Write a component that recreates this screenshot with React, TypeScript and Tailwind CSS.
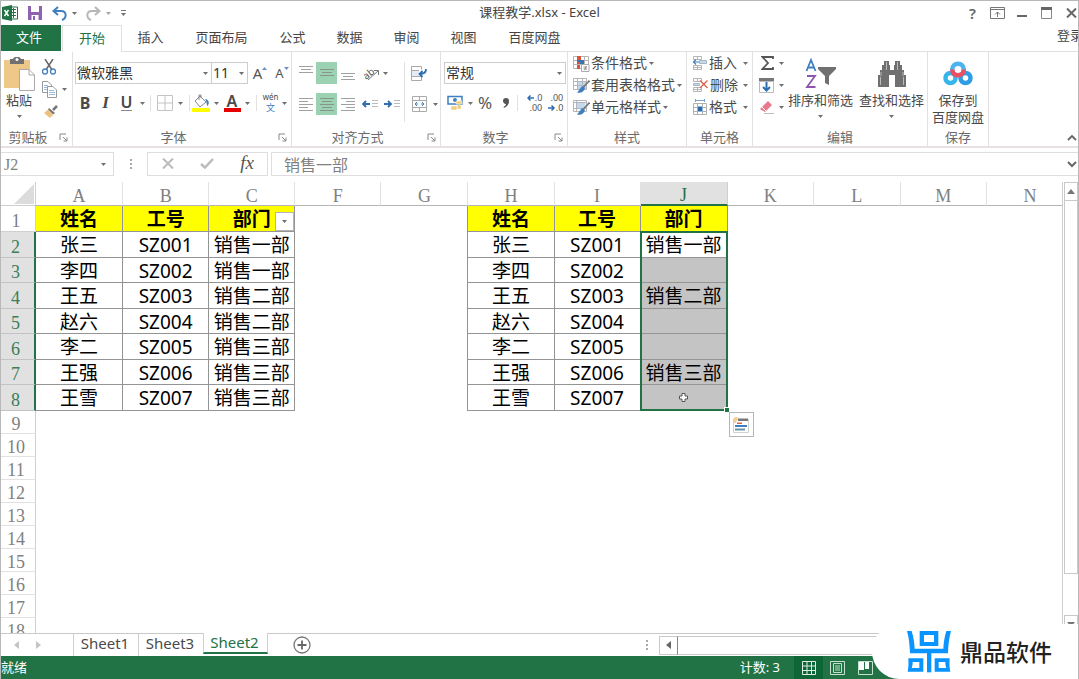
import React from "react";

type KidsProps = { children?: React.ReactNode };

const Caret = ({ className = "" }: { className?: string }) => (
  <svg className={`h-[3px] w-[5px] shrink-0 ${className}`} viewBox="0 0 5 3" aria-hidden="true">
    <path d="M0 0H5L2.5 3Z" fill="#707070" />
  </svg>
);

const Sep = ({ className = "h-4" }: { className?: string }) => (
  <span className={`w-px shrink-0 bg-[#e1e1e1] ${className}`} />
);

function Icon({ w, h, children }: { w: number; h: number } & KidsProps) {
  return (
    <svg width={w} height={h} viewBox={`0 0 ${w} ${h}`} fill="none" className="shrink-0" aria-hidden="true">
      {children}
    </svg>
  );
}

function Tool({ label, className = "", children }: { label: string; className?: string } & KidsProps) {
  return (
    <button type="button" aria-label={label} className={`flex h-[22px] shrink-0 items-center justify-center ${className}`}>
      {children}
    </button>
  );
}

function Group({ title, className, launcher, children }: { title: string; className: string; launcher?: boolean } & KidsProps) {
  return (
    <section className={`flex shrink-0 flex-col border-r border-[#e3e0e2] ${className}`}>
      <div className="flex min-h-0 flex-1">{children}</div>
      <div className="flex h-[18px] items-center px-1 text-[#6a6a6a]">
        <span className={`flex-1 text-center ${launcher ? "pr-2" : ""}`}>{title}</span>
        {launcher && (
          <button type="button" aria-label={`${title}设置`} className="shrink-0">
            <Icon w={9} h={9}>
              <path d="M1 7V1H7M4 4L8 8M8 4.500V8H4.500" stroke="#888" />
            </Icon>
          </button>
        )}
      </div>
    </section>
  );
}

function Pick({ label, value, className }: { label: string; value: string; className: string }) {
  return (
    <div className={`relative h-[22px] border border-[#cdcdcd] ${className}`}>
      <select aria-label={label} className="h-full w-full appearance-none bg-transparent pl-px text-[14px] leading-[20px] text-[#333] outline-none">
        <option>{value}</option>
      </select>
      <Caret className="pointer-events-none absolute right-[3px] top-[9px]" />
    </div>
  );
}

function Lines({ rows }: { rows: number[][] }) {
  return (
    <Icon w={14} h={14}>
      {rows.map(([x, y, w]) => (
        <path key={y} d={`M${x} ${y}.5h${w}`} stroke="#808080" strokeOpacity=".75" />
      ))}
    </Icon>
  );
}

const vTop = [[0, 0, 14], [2, 3, 10], [0, 6, 14]];
const vMid = [[0, 3, 14], [2, 6, 10], [0, 9, 14]];
const vBot = [[0, 7, 14], [2, 10, 10], [0, 13, 14]];
const hLeft = [[0, 1, 14], [0, 4, 9], [0, 7, 14], [0, 10, 9], [0, 13, 14]];
const hMid = [[0, 1, 14], [2, 4, 10], [0, 7, 14], [2, 10, 10], [0, 13, 14]];
const hRight = [[0, 1, 14], [5, 4, 9], [0, 7, 14], [5, 10, 9], [0, 13, 14]];

const Brush = () => (
  <>
    <path d="M16.500 3.500L10.500 10" stroke="#777" strokeWidth="1.800" />
    <path d="M10 9C7 10 7 13 4 15.500C8 16.500 11 15 12 11Z" fill="#3f7fbf" />
  </>
);

const icons = {
  cond: (
    <Icon w={17} h={17}>
      <path d="M.5 1.500H15.500V13.500H.5ZM.5 5.500H15.500M.5 9.500H15.500M11.500 1V13" stroke="#b5b5b5" />
      <path d="M4 1H8V5H4ZM4 10H7V14H4Z" fill="#d2553c" />
      <path d="M4 5H11V9H4Z" fill="#3a74b0" />
      <path d="M4 7H7V9H4Z" fill="#d2553c" />
      <path d="M8.500 9.500H16V16.500H8.500Z" fill="#fff" stroke="#aaa" />
      <path d="M10.500 12H14M10.500 14H14M13.500 11L11.500 15" stroke="#777" strokeWidth=".8" />
    </Icon>
  ),
  tableFmt: (
    <Icon w={17} h={17}>
      <path d="M.5 1.500H13.500V12.500H.5Z" fill="#fff" stroke="#b5b5b5" />
      <path d="M4 4H13V12H4Z" fill="#c4d8ec" />
      <path d="M.5 4.500H13M.5 8.500H13M4.500 1V12M9.500 1V12" stroke="#b0b6bc" />
      <Brush />
    </Icon>
  ),
  cellStyle: (
    <Icon w={17} h={17}>
      <path d="M.5 1.500H13.500V12.500H.5Z" fill="#fff" stroke="#b5b5b5" />
      <path d="M3 4H12V9H3Z" fill="#c4d8ec" />
      <path d="M.5 3.500H13M.5 9.500H13M3.500 1V12" stroke="#b0b6bc" />
      <Brush />
    </Icon>
  ),
  insert: (
    <Icon w={16} h={16}>
      <path d="M1.500 1.500H9.500V4.500H1.500ZM5.500 1V4M1.500 10.500H9.500V14.500H1.500ZM5.500 10V14M1.500 12.500H9" stroke="#b5b5b5" />
      <path d="M7.500 5.500H14.500V8.500H7.500Z" fill="#c4d8ec" stroke="#a9b7c4" />
      <path d="M7 7H1.500M4 4.500L1.500 7L4 9.500" stroke="#3f7fbf" strokeWidth="1.200" />
    </Icon>
  ),
  remove: (
    <Icon w={17} h={16}>
      <path d="M1.500 1.500H9.500V4.500H1.500ZM5.500 1V4M1.500 10.500H9.500V14.500H1.500ZM5.500 10V14M1.500 12.500H9" stroke="#b5b5b5" />
      <path d="M1.500 6.500H7.500V8.500H1.500Z" fill="#c4d8ec" stroke="#a9b7c4" />
      <path d="M8 3.500L15.500 11M15.500 3.500L8 11" stroke="#d9604f" strokeWidth="1.300" />
    </Icon>
  ),
  format: (
    <Icon w={16} h={17}>
      <path d="M3 1.500H13M3.500 0V3M12.500 0V3" stroke="#7aa5d0" />
      <path d="M1.500 4.500H14.500V15.500H1.500ZM5.500 4V15M10.500 4V15M1.500 8.500H14M1.500 12.500H14" stroke="#b0b0b0" />
      <path d="M5 7H11V13H5Z" fill="#8fb4da" />
      <path d="M6 8H10V12H6Z" fill="#2d68a5" />
    </Icon>
  ),
};

function MenuItem({ icon, text, className = "" }: { icon: React.ReactNode; text: string; className?: string }) {
  return (
    <button type="button" className={`flex h-[22px] items-center text-[14px] text-[#4a4a4a] ${className}`}>
      {icon}
      <span className="ml-px flex-1 whitespace-nowrap text-left">{text}</span>
      <Caret className="ml-[2px]" />
    </button>
  );
}

function BigButton({ icon, lines, caret, className = "" }: { icon: React.ReactNode; lines: string[]; caret?: boolean; className?: string }) {
  return (
    <button type="button" className={`flex shrink-0 flex-col items-center pt-1 text-[#4a4a4a] ${className}`}>
      <span className="flex h-9 items-center">{icon}</span>
      {lines.map((l) => (
        <span key={l} className="whitespace-nowrap leading-[17px]">{l}</span>
      ))}
      {caret && <Caret className="mt-[6px]" />}
    </button>
  );
}

function TitleBar() {
  return (
    <header className="flex h-6 shrink-0 items-center">
      <div className="flex w-1/3 items-center">
        <Icon w={18} h={18}>
          <path d="M9 3H16.500V15H9" fill="#fff" stroke="#217346" />
          <path d="M10 5.500H15M10 8.500H15M10 11.500H15M12.500 4V14" stroke="#217346" />
          <path d="M1 3L11 1V17L1 15Z" fill="#217346" />
          <path d="M3.500 6L7.500 12M7.500 6L3.500 12" stroke="#fff" strokeWidth="1.500" />
        </Icon>
        <button type="button" aria-label="保存" className="ml-[9px]">
          <Icon w={14} h={14}>
            <path d="M0 0H14V14H0Z" fill="#8e62b0" />
            <path d="M3 0H11V6H3Z" fill="#fff" />
            <path d="M3.500 9H10.500V14H3.500Z" fill="#fff" />
            <path d="M5 10H7V14H5Z" fill="#8e62b0" />
          </Icon>
        </button>
        <button type="button" aria-label="撤消" className="ml-[10px] flex items-center gap-[5px]">
          <Icon w={15} h={15}>
            <path d="M6 1L1.500 5L6 9M2 5H9C15 5 15 12 10 14" stroke="#3f7fbf" strokeWidth="2" />
          </Icon>
          <Caret />
        </button>
        <button type="button" aria-label="恢复" className="ml-[9px] flex items-center gap-[5px] opacity-60">
          <Icon w={15} h={15}>
            <path d="M9 1L13.500 5L9 9M13 5H6C0 5 0 12 5 14" stroke="#888" strokeWidth="2" />
          </Icon>
          <Caret />
        </button>
        <button type="button" aria-label="自定义快速访问工具栏" className="ml-[10px] flex flex-col items-center gap-0.5">
          <span className="h-px w-[5px] bg-[#777]" />
          <Caret />
        </button>
      </div>
      <h1 className="flex-1 text-center text-[13px] text-[#444]">课程教学.xlsx - Excel</h1>
      <div className="flex w-1/3 items-center justify-end text-[#666]">
        <button type="button" aria-label="帮助" className="mr-[14px] text-[15px] font-semibold leading-4">?</button>
        <button type="button" aria-label="功能区显示选项" className="mr-3">
          <Icon w={15} h={12}>
            <path d="M.5.5H14.500V11.500H.5ZM.5 2.500H14M7.500 10V5M5 7.500L7.500 5L10 7.500" stroke="#777" />
          </Icon>
        </button>
        <button type="button" aria-label="最小化" className="mr-[14px]">
          <Icon w={10} h={12}><path d="M0 9H10" stroke="#666" strokeWidth="2" /></Icon>
        </button>
        <button type="button" aria-label="最大化" className="mr-[14px]">
          <Icon w={11} h={12}><path d="M.5 1V11.500H10.500V1" stroke="#888" /><path d="M0 0H11V3H0Z" fill="#666" /></Icon>
        </button>
        <button type="button" aria-label="关闭" className="mr-px">
          <Icon w={11} h={10}><path d="M1 .5L10 9.500M10 .5L1 9.500" stroke="#666" strokeWidth="2" /></Icon>
        </button>
      </div>
    </header>
  );
}

const menuTabs = ["插入", "页面布局", "公式", "数据", "审阅", "视图", "百度网盘"];

function MenuTabs() {
  return (
    <nav className="flex h-[27px] shrink-0 text-[13px] text-[#444]">
      <button type="button" className="h-[26px] w-[60px] bg-[#217346] pr-1 text-white">文件</button>
      <button type="button" className="ml-px w-[60px] border-x border-t border-[#e3dfe1] bg-white text-[#217346]">开始</button>
      <div className="flex flex-1 border-b border-[#e3dfe1]">
        {menuTabs.map((t) => (
          <button key={t} type="button" className={t.length > 2 ? "w-[85px]" : "w-[57px]"}>{t}</button>
        ))}
        <button type="button" className="-mr-[5px] ml-auto whitespace-nowrap pb-1">登录</button>
      </div>
    </nav>
  );
}

function Ribbon() {
  return (
    <div className="flex h-[95px] shrink-0 overflow-hidden border-b border-[#e8e0e3] text-[13px] leading-[18px]">
      <Group title="剪贴板" className="w-[72px]" launcher>
        <BigButton
          caret
          className="w-[36px]"
          lines={["粘贴"]}
          icon={
            <Icon w={32} h={34}>
              <path d="M1 3H27V31H1Z" fill="#eec888" />
              <path d="M7 2H10C11-1 17-1 18 2H21V7H7Z" fill="#707070" />
              <circle cx="14" cy="2.500" r="1.500" fill="#fff" />
              <path d="M16.500 12.500H26L31.500 18V33.500H16.500Z" fill="#fff" stroke="#aaa" />
              <path d="M26 12.500V18H31.500" stroke="#aaa" />
            </Icon>
          }
        />
        <div className="flex flex-1 flex-col items-start pt-1">
          <Tool label="剪切" className="w-6">
            <Icon w={14} h={16}>
              <path d="M3 0L9.500 10M11 0L4.500 10" stroke="#666" strokeWidth="1.500" />
              <circle cx="3" cy="12.500" r="2.500" stroke="#3f7fbf" strokeWidth="1.300" />
              <circle cx="11" cy="12.500" r="2.500" stroke="#3f7fbf" strokeWidth="1.300" />
            </Icon>
          </Tool>
          <Tool label="复制" className="gap-[5px] pl-[5px]">
            <Icon w={15} h={17}>
              <path d="M.5.5H6L9.500 4V11.500H.5Z" fill="#fff" stroke="#999" />
              <path d="M2 4.500H6M2 6.500H6M2 8.500H6" stroke="#9bbbdc" />
              <path d="M5.500 5.500H11L14.500 9V16.500H5.500Z" fill="#fff" stroke="#999" />
              <path d="M7 9.500H12M7 11.500H13M7 13.500H13" stroke="#9bbbdc" />
            </Icon>
            <Caret />
          </Tool>
          <Tool label="格式刷" className="w-[28px]">
            <Icon w={14} h={13}>
              <path d="M13 1L9 5" stroke="#777" strokeWidth="2.500" />
              <path d="M5 3L11 8L9 9.500L4 4.500Z" fill="#777" />
              <path d="M4 4.500L9 10L6 13L0 8Z" fill="#eec27c" />
            </Icon>
          </Tool>
        </div>
      </Group>

      <Group title="字体" className="w-[219px]" launcher>
        <div className="flex flex-1 flex-col gap-2 pl-[2px] pt-[10px]">
          <div className="flex">
            <Pick label="字体" value="微软雅黑" className="w-[137px]" />
            <Pick label="字号" value="11" className="-ml-px w-[37px]" />
            <Tool label="增大字号" className="ml-px w-[22px] text-[15px] text-[#555]">
              A
              <Icon w={5} h={12}><path d="M0 3L2.500 0L5 3Z" fill="#6a93c0" /></Icon>
            </Tool>
            <Tool label="减小字号" className="w-[22px] text-[13px] text-[#555]">
              A
              <Icon w={5} h={12}><path d="M0 0H5L2.500 3Z" fill="#6a93c0" /></Icon>
            </Tool>
          </div>
          <div className="flex items-center text-[#4a4a4a]">
            <Tool label="加粗" className="w-5 text-[16px] font-bold">B</Tool>
            <Tool label="倾斜" className="w-[21px] font-['Liberation_Serif',serif] text-[17px] font-bold italic">I</Tool>
            <Tool label="下划线" className="w-[34px] gap-2 text-[16px] font-semibold"><span className="border-b border-[#888] leading-[15px]">U</span><Caret /></Tool>
            <Sep />
            <Tool label="边框" className="w-[38px] gap-[5px]">
              <Icon w={16} h={16}><path d="M.5.5H15.500V15.500H.5ZM8 0V16M0 8H16" stroke="#c4c4c4" /></Icon>
              <Caret />
            </Tool>
            <Sep />
            <Tool label="填充颜色" className="w-[31px] gap-1">
              <Icon w={18} h={18}>
                <path d="M3 7L8 2L14 8L8 13Z" fill="#fff" stroke="#888" />
                <path d="M7 6V1H9V4" stroke="#888" />
                <path d="M14 5C18 7 17 10 15.500 12C14 9 15 7 13 5.500Z" fill="#3f7fbf" />
                <path d="M0 14H18V18H0Z" fill="#ff0" />
              </Icon>
              <Caret />
            </Tool>
            <Tool label="字体颜色" className="w-[31px] gap-1">
              <span className="flex w-[17px] flex-col items-center text-[16px] font-semibold leading-[14px]">A<span className="h-1 w-full bg-[#e60000]" /></span>
              <Caret />
            </Tool>
            <Sep className="ml-1 h-4" />
            <Tool label="拼音指南" className="ml-1 w-[28px] gap-1">
              <span className="flex flex-col items-center text-[8px] leading-[10px]">wén<span className="text-[9px] leading-[12px] text-[#3f7fbf]">文</span></span>
              <Caret />
            </Tool>
          </div>
        </div>
      </Group>

      <Group title="对齐方式" className="w-[149px]" launcher>
        <div className="flex flex-1 pl-[3px] pt-[10px]">
          <div className="flex w-[109px] flex-col gap-[9px]">
            <div className="flex">
              <Tool label="顶端对齐" className="w-[21px]"><Lines rows={vTop} /></Tool>
              <Tool label="垂直居中" className="w-[21px] bg-[#9bd3b2]"><Lines rows={vMid} /></Tool>
              <Tool label="底端对齐" className="w-[21px]"><Lines rows={vBot} /></Tool>
              <Tool label="方向" className="w-[34px] gap-[3px]">
                <Icon w={18} h={18}>
                  <text x="1" y="13" transform="rotate(-38 7 10)" fontSize="10" fill="#555">ab</text>
                  <path d="M6 16L16 7M12 6.500H16.500V11" stroke="#777" />
                </Icon>
                <Caret />
              </Tool>
            </div>
            <div className="flex">
              <Tool label="左对齐" className="w-[21px]"><Lines rows={hLeft} /></Tool>
              <Tool label="居中" className="w-[21px] bg-[#9bd3b2]"><Lines rows={hMid} /></Tool>
              <Tool label="右对齐" className="w-[21px]"><Lines rows={hRight} /></Tool>
              <Tool label="减少缩进量" className="w-6">
                <Icon w={16} h={10}><path d="M8 5H1M4 2L1 5L4 8" stroke="#2f6fb0" strokeWidth="1.800" /><path d="M10 1.500H16M10 4.500H16M10 7.500H16" stroke="#bbb" /></Icon>
              </Tool>
              <Tool label="增加缩进量" className="w-5">
                <Icon w={16} h={10}><path d="M0 5H7M4 2L7 5L4 8" stroke="#2f6fb0" strokeWidth="1.800" /><path d="M10 1.500H16M10 4.500H16M10 7.500H16" stroke="#bbb" /></Icon>
              </Tool>
            </div>
          </div>
          <Sep className="h-[60px]" />
          <div className="flex flex-col gap-[9px] pl-[6px]">
            <Tool label="自动换行" className="w-4">
              <Icon w={16} h={16}>
                <path d="M.5 1V15.500H10.500V12M.5 1.500H10.500V4.500M.5 5.500H8M.5 11.500H10" stroke="#aaa" />
                <path d="M1 6H8V11H1Z" fill="#e4ecf5" />
                <path d="M15 4C15 8 13 9 9 9M11.500 6L8.500 9L11.500 12" stroke="#2f6fb0" strokeWidth="1.800" />
              </Icon>
            </Tool>
            <Tool label="合并后居中" className="w-[27px] gap-[5px]">
              <Icon w={16} h={16}>
                <path d="M.5.5H14.500V15.500H.5ZM.5 4.500H14M.5 11.500H14M7.500 0V4M7.500 12V15" stroke="#aaa" />
                <path d="M3 8H6M9 8H12M5 6L3 8L5 10M10 6L12 8L10 10" stroke="#3f7fbf" />
              </Icon>
              <Caret />
            </Tool>
          </div>
        </div>
      </Group>

      <Group title="数字" className="w-[127px]" launcher>
        <div className="flex flex-1 flex-col gap-[8px] pl-[3px] pt-[10px]">
          <Pick label="数字格式" value="常规" className="w-[122px]" />
          <div className="flex items-center text-[#555]">
            <Tool label="会计数字格式" className="w-[31px] gap-1">
              <Icon w={17} h={16}>
                <path d="M1 1.500H15V9H1Z" fill="#fff" stroke="#3f7fbf" strokeWidth="1.500" />
                <circle cx="8" cy="5" r="2" fill="#3f7fbf" />
                <path d="M9 6H15V9H9ZM4 11H10V15H4ZM10 10H14V14H10Z" fill="#f2cd7a" stroke="#fff" strokeWidth=".5" />
              </Icon>
              <Caret />
            </Tool>
            <Tool label="百分比样式" className="w-[20px] text-[17px]">%</Tool>
            <Tool label="千位分隔样式" className="w-[22px]">
              <Icon w={8} h={12}><path d="M1 4A3 3 0 1 1 7 4C7 8 4 10 2 11L1.500 10C3 9 4 8 4 7C2 7 1 5.500 1 4Z" fill="#555" /></Icon>
            </Tool>
            <Sep className="mr-[6px] h-4" />
            <Tool label="增加小数位数" className="w-[21px]">
              <span className="flex flex-col items-end text-[9px] leading-[10px]">
                <span className="flex items-center">
                  <Icon w={8} h={6}><path d="M7 3H1M3.500 .5L1 3L3.500 5.500" stroke="#2f6fb0" strokeWidth="1.500" /></Icon>.0
                </span>
                <span>.00</span>
              </span>
            </Tool>
            <Tool label="减少小数位数" className="w-[21px]">
              <span className="flex flex-col items-end text-[9px] leading-[10px]">
                <span>.00</span>
                <span className="flex items-center">
                  <Icon w={8} h={6}><path d="M0 3H6M3.500 .5L6 3L3.500 5.500" stroke="#2f6fb0" strokeWidth="1.500" /></Icon>.0
                </span>
              </span>
            </Tool>
          </div>
        </div>
      </Group>

      <Group title="样式" className="w-[119px]">
        <div className="flex flex-col items-start pl-[5px]">
          <MenuItem icon={icons.cond} text="条件格式" />
          <MenuItem icon={icons.tableFmt} text="套用表格格式" />
          <MenuItem icon={icons.cellStyle} text="单元格样式" />
        </div>
      </Group>

      <Group title="单元格" className="w-[66px]">
        <div className="flex flex-1 flex-col pl-[5px] pr-1">
          <MenuItem icon={icons.insert} text="插入" />
          <MenuItem icon={icons.remove} text="删除" />
          <MenuItem icon={icons.format} text="格式" />
        </div>
      </Group>

      <Group title="编辑" className="w-[175px]">
        <div className="flex w-[31px] flex-col items-end">
          <Tool label="自动求和" className="gap-[5px]">
            <Icon w={13} h={14}><path d="M12 3V1H1.500L7 7L1.500 13H12V11" stroke="#555" strokeWidth="1.800" /></Icon>
            <Caret />
          </Tool>
          <Tool label="填充" className="gap-[5px]">
            <Icon w={15} h={15}><path d="M.5 3.500H14.500V14.500H.5Z" stroke="#bbb" /><path d="M0 0H15V3H0Z" fill="#777" /><path d="M7.500 4V12M4 9L7.500 12.500L11 9" stroke="#2f6fb0" strokeWidth="2" /></Icon>
            <Caret />
          </Tool>
          <Tool label="清除" className="gap-[5px]">
            <Icon w={15} h={13}><path d="M9 0L13 4L6 11L1 8Z" fill="#e8798c" /><path d="M3 6L7 10" stroke="#fff" /><path d="M5 12.500H15" stroke="#bbb" /></Icon>
            <Caret />
          </Tool>
        </div>
        <BigButton
          caret
          className="w-[73px]"
          lines={["排序和筛选"]}
          icon={
            <Icon w={32} h={32}>
              <path d="M1.500 13L6 2L10.500 13M3 9.500H9" stroke="#3f7fbf" strokeWidth="1.800" />
              <path d="M2 18H10L2 29H10.500" stroke="#8e55b0" strokeWidth="1.800" />
              <path d="M13 9H31V11L24 18V27L20 25V18L13 11Z" fill="#707070" />
            </Icon>
          }
        />
        <BigButton
          caret
          className="w-[69px]"
          lines={["查找和选择"]}
          icon={
            <Icon w={30} h={28}>
              <path d="M7 1H12V5H13V10H17V5H18V1H23V5H25V10H27V15H29V27H18V15H12V27H1V15H3V10H5V5H7Z" fill="#707070" />
              <path d="M9.500 2V10M20.500 2V10M4 12V16M26 12V16M3.500 17V25M26.500 17V25" stroke="#bbb" />
            </Icon>
          }
        />
      </Group>

      <Group title="保存" className="w-[61px]">
        <BigButton
          className="w-[60px]"
          lines={["保存到", "百度网盘"]}
          icon={
            <Icon w={30} h={26}>
              <circle cx="7.500" cy="17" r="5" stroke="#35b5ea" strokeWidth="4.500" />
              <circle cx="22.500" cy="17" r="5" stroke="#2f9de4" strokeWidth="4.500" />
              <circle cx="15" cy="8.500" r="5.800" stroke="#4db4ee" strokeWidth="4.500" />
              <path d="M9.200 8.500A5.800 5.800 0 0 0 20.800 8.500" stroke="#ec4e62" strokeWidth="4.500" />
            </Icon>
          }
        />
      </Group>

      <div className="flex flex-1 items-end justify-end pb-1 pr-px">
        <button type="button" aria-label="折叠功能区">
          <Icon w={10} h={8}><path d="M1 6L5 2L9 6" stroke="#666" strokeWidth="1.800" /></Icon>
        </button>
      </div>
    </div>
  );
}

const Dots = () => (
  <span className="flex flex-col gap-[2px]" aria-hidden="true">
    <span className="size-[2px] bg-[#aaa]" />
    <span className="size-[2px] bg-[#aaa]" />
    <span className="size-[2px] bg-[#aaa]" />
  </span>
);

function FormulaBar() {
  return (
    <div className="flex h-[35px] shrink-0 items-center border-t border-[#e8e0e3] pb-[3px] font-['Liberation_Serif','Noto_Sans_CJK_SC',serif] text-[16px] text-[#808080]">
      <div className="relative h-6 w-[113px] border border-l-0 border-[#dedede]">
        <input aria-label="名称框" defaultValue="J2" className="h-full w-full bg-transparent pl-[3px] outline-none" />
        <Caret className="pointer-events-none absolute right-[7px] top-[10px]" />
      </div>
      <div className="flex w-[33px] justify-center"><Dots /></div>
      <div className="flex h-6 w-[121px] items-center border border-[#dedede]">
        <Tool label="取消" className="w-[39px]"><Icon w={12} h={11}><path d="M1 .5L11 10.500M11 .5L1 10.500" stroke="#bbb" strokeWidth="2" /></Icon></Tool>
        <Tool label="输入" className="w-[40px]"><Icon w={14} h={11}><path d="M1 6L5 9.500L13 1" stroke="#bbb" strokeWidth="2.500" /></Icon></Tool>
        <Tool label="插入函数" className="w-[40px] text-[19px] italic text-[#555]">fx</Tool>
      </div>
      <div className="ml-[3px] flex h-6 flex-1 items-center border border-r-0 border-[#dedede]">
        <input aria-label="编辑栏" defaultValue="销售一部" className="h-full min-w-0 flex-1 bg-transparent pl-3 outline-none" />
        <button type="button" aria-label="展开编辑栏" className="mr-px">
          <Icon w={10} h={8}><path d="M1 2L5 6L9 2" stroke="#666" strokeWidth="2" /></Icon>
        </button>
      </div>
    </div>
  );
}

const columns = ["A", "B", "C", "F", "G", "H", "I", "J", "K", "L", "M", "N"];
const wideColumns = ["A", "G", "J", "L", "N"];

const people = [
  ["张三", "SZ001", "销售一部", "销售一部"],
  ["李四", "SZ002", "销售一部", ""],
  ["王五", "SZ003", "销售二部", "销售二部"],
  ["赵六", "SZ004", "销售二部", ""],
  ["李二", "SZ005", "销售三部", ""],
  ["王强", "SZ006", "销售三部", "销售三部"],
  ["王雪", "SZ007", "销售三部", ""],
];

const dataRowTall = [true, false, true, false, true, false, true];
const emptyRows = [9, 10, 11, 12, 13, 14, 15, 16, 17, 18];
const shortEmptyRows = [10, 13, 17];

const cell = "border-b border-r border-[#949494] p-0 pt-px text-center text-[19px] leading-[22px] whitespace-nowrap";
const headCell = `${cell} bg-[#ffff00] font-bold`;
const leftEdge = "shadow-[-1px_0_#949494]";
const rowHead = "border-b border-r p-0 pr-1 pt-1 text-[18px] font-normal leading-[18px] font-['Liberation_Serif',serif]";

function Selection() {
  return (
    <div className="pointer-events-none absolute -left-px -top-px z-10 h-[180px] w-[88px] border-2 border-[#217346]">
      <span className="absolute -bottom-[3px] -right-[3px] size-[5px] border-l border-t border-white bg-[#217346]" />
      <svg className="absolute bottom-[7px] left-[37px] size-[9px]" viewBox="0 0 9 9" aria-hidden="true">
        <path d="M3 .5H6V3H8.500V6H6V8.500H3V6H.5V3H3Z" fill="#fff" stroke="#555" />
      </svg>
      <button type="button" aria-label="快速分析" className="pointer-events-auto absolute -bottom-[28px] left-[87px] flex size-[25px] items-center justify-center border border-[#b5b5b5] bg-white">
        <Icon w={16} h={16}>
          <path d="M.5 2.500H15.500V15.500H.5Z" stroke="#d0d0d0" />
          <path d="M0 2L2 0H5L3 6H0Z" fill="#f5cf96" />
          <path d="M5 1.500H15V4H5Z" fill="#777" />
          <path d="M4 5.500H9V7H4Z" fill="#d9654f" />
          <path d="M2 8H14V10H2Z" fill="#3f7fbf" />
          <path d="M2 11.500H12V13.500H2Z" fill="#6a93a8" />
        </Icon>
      </button>
    </div>
  );
}

function Grid() {
  return (
    <table className="w-[1073px] shrink-0 table-fixed border-separate border-spacing-0 self-start text-black">
      <colgroup>
        <col className="w-[35px]" />
        {columns.map((c) => (
          <col key={c} className={wideColumns.includes(c) ? "w-[87px]" : "w-[86px]"} />
        ))}
      </colgroup>
      <thead>
        <tr className="h-6 font-['Liberation_Serif',serif] text-[18px] text-[#808080]">
          <th className="border-b border-r border-[#cfcfcf] p-0">
            <svg className="ml-auto mr-px size-[20px]" viewBox="0 0 20 20" aria-hidden="true"><path d="M20 0V20H0Z" fill="#dcdcdc" /></svg>
          </th>
          {columns.map((c) => (
            <th
              key={c}
              scope="col"
              className={`p-0 pt-1 font-normal leading-[18px] ${c === "J" ? "border-b-2 border-r border-b-[#217346] border-r-[#cfcfcf] bg-[#e1e1e1] text-[#217346]" : "border-b border-r border-b-[#b5b5b5] border-r-[#e2e2e2]"}`}
            >
              {c}
            </th>
          ))}
        </tr>
      </thead>
      <tbody>
        <tr className="h-[26px]">
          <th scope="row" className={`${rowHead} border-[#cfcfcf] text-[#808080]`}>1</th>
          <td className={headCell}>姓名</td>
          <td className={headCell}>工号</td>
          <td className={`${headCell} relative`}>
            部门
            <button type="button" aria-label="筛选部门" className="absolute bottom-0 right-0 flex size-[19px] items-center justify-center border border-[#b5b5b5] bg-white">
              <Caret />
            </button>
          </td>
          <td colSpan={2} />
          <td className={`${headCell} ${leftEdge}`}>姓名</td>
          <td className={headCell}>工号</td>
          <td className={headCell}>部门</td>
          <td colSpan={4} />
        </tr>
        {people.map(([name, id, dept, merged], i) => (
          <tr key={id} className={dataRowTall[i] ? "h-[26px]" : "h-[25px]"}>
            <th scope="row" className={`${rowHead} border-b-[#c3c3c3] border-r-2 border-r-[#217346] bg-[#e1e1e1] text-[#3b7d58]`}>{i + 2}</th>
            <td className={cell}>{name}</td>
            <td className={cell}>{id}</td>
            <td className={cell}>{dept}</td>
            <td colSpan={2} />
            <td className={`${cell} ${leftEdge}`}>{name}</td>
            <td className={cell}>{id}</td>
            <td className={`${cell} relative ${i === 0 ? "bg-white" : "bg-[#c4c4c4]"}`}>
              {merged}
              {i === 0 && <Selection />}
            </td>
            <td colSpan={4} />
          </tr>
        ))}
        {emptyRows.map((n) => (
          <tr key={n} className={shortEmptyRows.includes(n) ? "h-[22px]" : "h-[23px]"}>
            <th scope="row" className={`${rowHead} border-b-[#e2e2e2] border-r-[#cfcfcf] text-[#808080]`}>{n}</th>
            <td colSpan={12} />
          </tr>
        ))}
      </tbody>
    </table>
  );
}

function VerticalScroll() {
  return (
    <div className="flex w-4 shrink-0 flex-col border-l border-[#cfcfcf] bg-white pl-px">
      <button type="button" aria-label="向上滚动" className="flex h-[19px] items-center justify-center border border-[#c9c9c9]">
        <Icon w={8} h={5}><path d="M0 5L4 0L8 5Z" fill="#777" /></Icon>
      </button>
      <div className="-mt-px h-[83%] border border-[#c9c9c9]" />
      <button type="button" aria-label="向下滚动" className="mt-auto flex h-[18px] items-end justify-center border border-b-0 border-[#c9c9c9] pb-[6px]">
        <Icon w={8} h={5}><path d="M0 0L4 5L8 0Z" fill="#777" /></Icon>
      </button>
    </div>
  );
}

function SheetBar() {
  return (
    <div className="flex h-[23px] shrink-0 items-stretch border-t border-[#c9c9c9] text-[15px] text-[#4a4a4a]">
      <div className="flex w-[72px] items-center gap-[17px] pl-[13px]">
        <button type="button" aria-label="上一张工作表"><Icon w={5} h={8}><path d="M5 0L0 4L5 8Z" fill="#c4c4c4" /></Icon></button>
        <button type="button" aria-label="下一张工作表"><Icon w={5} h={8}><path d="M0 0L5 4L0 8Z" fill="#c4c4c4" /></Icon></button>
      </div>
      <button type="button" className="w-[65px] border-l border-[#d0d0d0] pb-1 pr-[2px] leading-[18px]">Sheet1</button>
      <button type="button" className="w-[65px] border-l border-[#d0d0d0] pb-1 pr-[2px] leading-[18px]">Sheet3</button>
      <button type="button" className="-mt-px mb-[2px] w-[65px] border-x border-b-2 border-x-[#d0d0d0] border-b-[#217346] bg-white pb-px pr-[2px] leading-[18px] text-[#217346]">Sheet2</button>
      <button type="button" aria-label="新工作表" className="ml-[25px]">
        <Icon w={18} h={18}><circle cx="9" cy="9" r="8" stroke="#777" strokeWidth="1.300" /><path d="M9 4.500V13.500M4.500 9H13.500" stroke="#666" strokeWidth="1.800" /></Icon>
      </button>
      <div className="ml-auto flex w-[432px] items-center">
        <Dots />
        <button type="button" aria-label="向左滚动" className="ml-[11px] flex h-[19px] w-[19px] items-center justify-center border border-[#c9c9c9]">
          <Icon w={5} h={8}><path d="M5 0L0 4L5 8Z" fill="#666" /></Icon>
        </button>
        <div className="-ml-px h-[19px] flex-1 border border-[#c9c9c9] border-l-[#888]" />
      </div>
    </div>
  );
}

function StatusBar() {
  return (
    <footer className="flex h-[23px] shrink-0 items-center bg-[#217346] text-[13px] text-white">
      <span>就绪</span>
      <span className="ml-auto mr-[14px]">计数: 3</span>
      <div className="mr-[199px] flex h-full items-center">
        <button type="button" aria-label="普通" className="flex h-full w-[29px] items-center justify-center bg-[#0e6536]">
          <Icon w={14} h={14}><path d="M.5.5H13.500V13.500H.5ZM5 0V14M9.500 0V14M0 5H14M0 9.500H14" stroke="#dfeee5" /></Icon>
        </button>
        <button type="button" aria-label="页面布局视图" className="flex h-full w-[28px] items-center justify-center">
          <Icon w={15} h={14}><path d="M.5.5H14.500V13.500H.5ZM3.500 2.500H11.500V11.500H3.500ZM5 5H10M5 7H10M5 9H10" stroke="#c5dfd0" /></Icon>
        </button>
        <button type="button" aria-label="分页预览" className="flex h-full w-[28px] items-center justify-center">
          <Icon w={15} h={14}><path d="M.5.5H14.500V13.500H.5Z" stroke="#c5dfd0" /><path d="M1 1H6V9H1ZM7 1H11V8H7Z" fill="#fff" /></Icon>
        </button>
      </div>
    </footer>
  );
}

function BrandBadge() {
  return (
    <aside className="absolute bottom-0 right-0 z-20 flex h-[55px] w-[206px] items-center gap-[9px] rounded-l-[28px] bg-white pl-[35px]">
      <svg className="h-[43px] w-[44px] shrink-0" viewBox="0 0 132 129" fill="none" aria-hidden="true">
        <g fill="#0a94ff">
          <path d="M0 3H14C20 22 22 40 23 56H109C110 40 112 22 118 3H132C126 24 124 44 123 70H9C8 44 6 24 0 3Z" />
          <path fillRule="evenodd" d="M38 3H94V48H38ZM51 15V36H81V15Z" />
          <path d="M60 68H73V127H60Z" />
          <path fillRule="evenodd" d="M4 85H49V125H2C4 116 5 108 4 85ZM17 96C17 104 16 109 14 114H37V96Z" />
          <path fillRule="evenodd" d="M128 85H83V125H130C128 116 127 108 128 85ZM115 96C115 104 116 109 118 114H95V96Z" />
        </g>
      </svg>
      <span className="whitespace-nowrap text-[23px] font-medium leading-7 text-[#222]">鼎品软件</span>
    </aside>
  );
}

export default function App() {
  return (
    <div className="relative flex h-screen flex-col overflow-hidden border-x border-t border-[#b8b8b8] bg-white font-['Noto_Sans','Noto_Sans_CJK_SC',sans-serif]">
      <TitleBar />
      <MenuTabs />
      <Ribbon />
      <FormulaBar />
      <main className="flex min-h-0 flex-1">
        <div className="flex min-w-0 flex-1 overflow-hidden">
          <Grid />
        </div>
        <VerticalScroll />
      </main>
      <SheetBar />
      <StatusBar />
      <BrandBadge />
    </div>
  );
}
